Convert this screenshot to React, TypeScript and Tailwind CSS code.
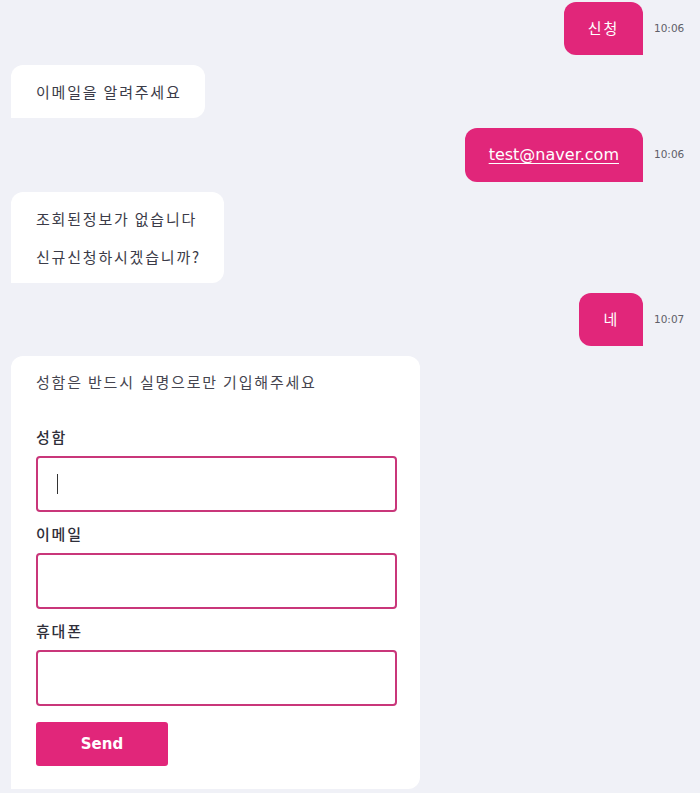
import React from "react";

const KR = { fontFamily: '"Noto Sans CJK KR", "Noto Sans", sans-serif' };
const LAT = { fontFamily: '"DejaVu Sans", "Noto Sans CJK KR", sans-serif' };

function UserMsg({ children, time, h = "h-[53px]" }: { children: React.ReactNode; time: string; h?: string }) {
  return (
    <div className="flex items-center justify-end pr-[16px]">
      <div
        className={`${h} flex items-center justify-center px-[24px] bg-[#e1267a] text-white text-[15px] tracking-[1.8px] rounded-tl-[12px] rounded-tr-[12px] rounded-bl-[12px]`}
        style={KR}
      >
        {children}
      </div>
      <div className="ml-[11px] w-[30px] text-[10.5px] text-[#5f5f68]" style={LAT}>
        {time}
      </div>
    </div>
  );
}

function BotMsg({ children }: { children: React.ReactNode }) {
  return (
    <div className="flex pl-[11px]">
      <div
        className="bg-white pl-[25px] pr-[23px] py-[16px] text-[15px] tracking-[1.8px] leading-[21px] text-[#3b3b48] rounded-tl-[12px] rounded-tr-[12px] rounded-br-[12px] flex flex-col gap-[17px]"
        style={KR}
      >
        {children}
      </div>
    </div>
  );
}

function Field({ label, caret }: { label: string; caret?: boolean }) {
  return (
    <div className="flex flex-col">
      <div className="text-[15px] tracking-[1.8px] leading-[20px] font-medium text-[#2f2f3a] mb-[9px]" style={KR}>
        {label}
      </div>
      <div className="relative w-[361px] h-[56px]">
        <input
          className="block w-full h-[56px] border-2 border-[#c9367a] rounded-[4px] bg-white outline-none px-[20px]"
          readOnly
        />
        {caret && <span className="absolute left-[21px] top-[18px] w-[1px] h-[20px] bg-[#333]" />}
      </div>
    </div>
  );
}

export default function App() {
  return (
    <div className="w-[700px] h-[793px] bg-[#f0f1f7] overflow-hidden pt-[2px] flex flex-col gap-[10px]">
      <UserMsg time="10:06">신청</UserMsg>
      <BotMsg>
        <p>이메일을 알려주세요</p>
      </BotMsg>
      <UserMsg time="10:06" h="h-[54px]">
        <span className="underline underline-offset-[3px] text-[16px] tracking-normal" style={LAT}>
          test@naver.com
        </span>
      </UserMsg>
      <BotMsg>
        <p>조회된정보가 없습니다</p>
        <p>신규신청하시겠습니까?</p>
      </BotMsg>
      <UserMsg time="10:07">네</UserMsg>
      <div className="flex pl-[11px]">
        <div className="w-[409px] bg-white pl-[25px] pr-[23px] pt-[16px] pb-[23px] rounded-tl-[12px] rounded-tr-[12px] rounded-br-[12px]">
          <p className="text-[15px] tracking-[1.8px] leading-[20px] text-[#45454f]" style={KR}>
            성함은 반드시 실명으로만 기입해주세요
          </p>
          <div className="mt-[35px] flex flex-col gap-[12px]">
            <Field label="성함" caret />
            <Field label="이메일" />
            <Field label="휴대폰" />
          </div>
          <button
            className="block mt-[16px] w-[132px] h-[44px] bg-[#e1267a] rounded-[3px] text-white font-bold text-[15px]"
            style={LAT}
          >
            Send
          </button>
        </div>
      </div>
    </div>
  );
}
